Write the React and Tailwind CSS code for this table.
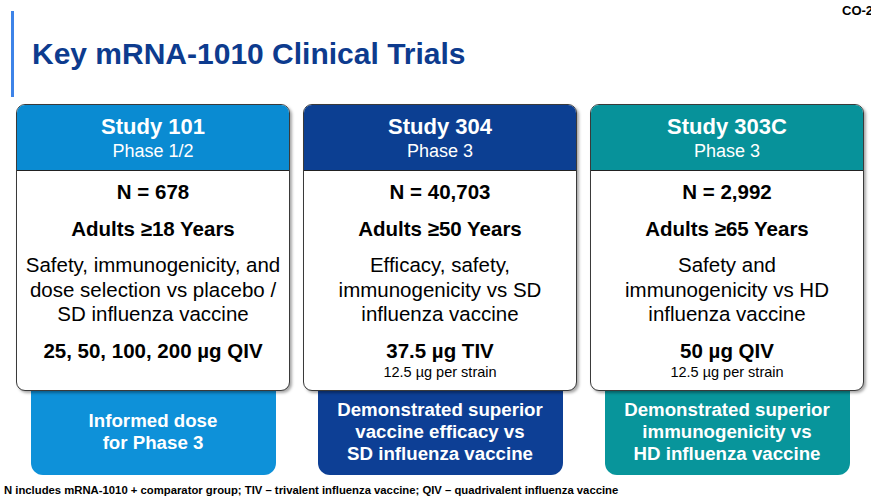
import React from "react";

const studies = [
  {
    title: "Study 101",
    phase: "Phase 1/2",
    head: "bg-[#0a8bd2]",
    box: "bg-[#0e91d9]",
    n: "N = 678",
    age: "Adults ≥18 Years",
    desc: ["Safety, immunogenicity, and", "dose selection vs placebo /", "SD influenza vaccine"],
    dose: "25, 50, 100, 200 µg QIV",
    strain: null,
    result: ["Informed dose", "for Phase 3"],
  },
  {
    title: "Study 304",
    phase: "Phase 3",
    head: "bg-[#0c3f92]",
    box: "bg-[#0d3f95]",
    n: "N = 40,703",
    age: "Adults ≥50 Years",
    desc: ["Efficacy, safety,", "immunogenicity vs SD", "influenza vaccine"],
    dose: "37.5 µg TIV",
    strain: "12.5 µg per strain",
    result: ["Demonstrated superior", "vaccine efficacy vs", "SD influenza vaccine"],
  },
  {
    title: "Study 303C",
    phase: "Phase 3",
    head: "bg-[#07929a]",
    box: "bg-[#08959b]",
    n: "N = 2,992",
    age: "Adults ≥65 Years",
    desc: ["Safety and", "immunogenicity vs HD", "influenza vaccine"],
    dose: "50 µg QIV",
    strain: "12.5 µg per strain",
    result: ["Demonstrated superior", "immunogenicity vs", "HD influenza vaccine"],
  },
];

function StudyCard({ s }) {
  return (
    <div className="w-[274px] flex flex-col items-center">
      <div className="w-full rounded-[9px] border border-[#3a3a3a] overflow-hidden bg-white shadow-[2px_2px_3px_rgba(0,0,0,0.35)] relative z-10">
        <div className={`${s.head} h-[66px] border-b border-[#222] pt-[9px] flex flex-col items-center text-white`}>
          <div className="text-[22px] leading-[26px] font-bold">{s.title}</div>
          <div className="text-[18px] leading-[22px]">{s.phase}</div>
        </div>
        <div className="h-[219px] pt-[9px] text-center text-black">
          <div className="text-[20.5px] leading-[24px] font-bold">{s.n}</div>
          <div className="mt-[13px] text-[20.5px] leading-[24px] font-bold">{s.age}</div>
          <div className="mt-[12px] text-[20.5px] leading-[24.5px] whitespace-nowrap">
            {s.desc.map((line) => (
              <div key={line}>{line}</div>
            ))}
          </div>
          <div className="mt-[12px] text-[20.5px] leading-[24px] font-bold">{s.dose}</div>
          {s.strain && <div className="text-[14.5px] leading-[18px]">{s.strain}</div>}
        </div>
      </div>
      <div
        className={`${s.box} w-[245px] h-[84px] pb-[2px] rounded-b-[12px] flex flex-col items-center justify-center text-white font-bold text-[18.7px] leading-[22px] text-center`}
      >
        {s.result.map((line) => (
          <div key={line}>{line}</div>
        ))}
      </div>
    </div>
  );
}

export default function App() {
  return (
    <div
      className="w-[871px] h-[500px] relative overflow-hidden bg-white"
      style={{ fontFamily: '"Liberation Sans", Arial, sans-serif' }}
    >
      {/* slide number, cut at the edge */}
      <div className="absolute left-[842px] top-[1px] text-[13px] font-bold text-black whitespace-nowrap">
        CO-2
      </div>

      <div className="flex items-center pt-[11px] pl-[11px]">
        <div className="w-[3px] h-[86px] bg-[#3d83e8]" />
        <h1 className="ml-[18px] text-[30px] font-bold text-[#0d3b8e] leading-none">
          Key mRNA-1010 Clinical Trials
        </h1>
      </div>

      <div className="mt-[7px] pl-[16px] flex gap-[13px]">
        {studies.map((s) => (
          <StudyCard key={s.title} s={s} />
        ))}
      </div>

      <div className="mt-[8px] pl-[4px] text-[11.3px] leading-[14px] font-bold text-black whitespace-nowrap">
        N includes mRNA-1010 + comparator group; TIV – trivalent influenza vaccine; QIV – quadrivalent influenza vaccine
      </div>
    </div>
  );
}
